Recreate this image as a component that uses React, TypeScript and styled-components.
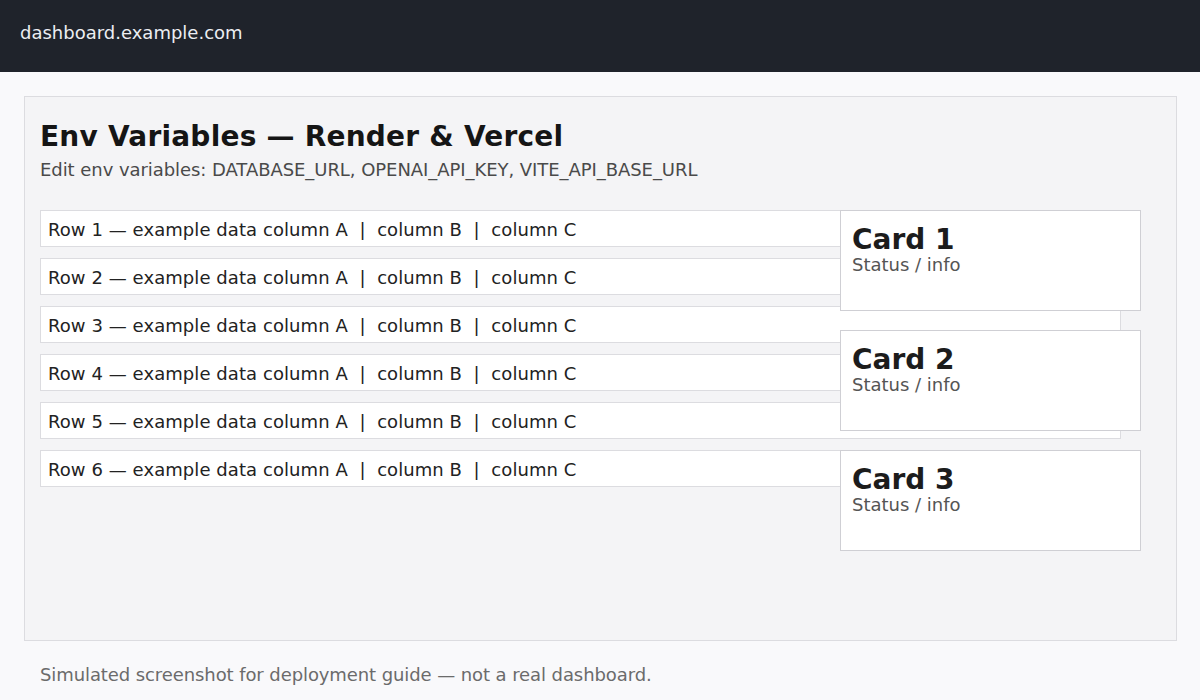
import React from "react";
import styled, { createGlobalStyle } from "styled-components";

const Global = createGlobalStyle`
  html, body { margin: 0; padding: 0; }
  body {
    background: #f9f9fb;
    font-family: "DejaVu Sans", Verdana, sans-serif;
    width: 1200px;
    height: 700px;
    overflow: hidden;
  }
`;

const Header = styled.header`
  height: 72px;
  box-sizing: border-box;
  background: #1f232b;
  color: #eceef2;
  font-size: 18px;
  padding: 22px 20px 0;
`;

const Main = styled.main`
  padding: 24px 23px 0 24px;
`;

const Panel = styled.section`
  box-sizing: border-box;
  height: 545px;
  background: #f4f4f6;
  border: 1px solid #dcdce0;
  padding: 23px 15px 16px;
`;

const Title = styled.h1`
  margin: 0;
  font-size: 28px;
  font-weight: 700;
  color: #151515;
  line-height: normal;
  letter-spacing: 0.22px;
`;

const Subtitle = styled.p`
  margin: 6px 0 30px;
  font-size: 18px;
  color: #4a4a4a;
  line-height: normal;
  letter-spacing: -0.06px;
`;

const Board = styled.div`
  display: grid;
  grid-template-columns: 800px 281px 20px;
  align-items: start;
`;

const RowList = styled.div`
  grid-column: 1 / 3;
  grid-row: 1;
  display: flex;
  flex-direction: column;
  gap: 11px;
`;

const Row = styled.div`
  background: #ffffff;
  border: 1px solid #dcdce0;
  padding: 8px 7px 5px;
  font-size: 18px;
  line-height: 22px;
  color: #222;
  white-space: pre;
  letter-spacing: 0.07px;
`;

const CardList = styled.div`
  grid-column: 2 / 4;
  grid-row: 1;
  display: flex;
  flex-direction: column;
  gap: 19px;
`;

const Card = styled.div`
  box-sizing: border-box;
  height: 101px;
  background: #ffffff;
  border: 1px solid #cfcfd4;
  padding: 12px 11px;
`;

const CardTitle = styled.div`
  font-size: 28px;
  font-weight: 700;
  color: #1c1c1c;
  line-height: normal;
`;

const CardInfo = styled.div`
  margin-top: -2px;
  font-size: 18px;
  color: #555;
  line-height: normal;
`;

const Footer = styled.footer`
  padding: 23px 40px 0;
  font-size: 18px;
  color: #6b6b6b;
  line-height: normal;
  letter-spacing: -0.09px;
`;

const rows = [1, 2, 3, 4, 5, 6];
const cards = [1, 2, 3];

export default function App() {
  return (
    <>
      <Global />
      <Header>dashboard.example.com</Header>
      <Main>
        <Panel>
          <Title>Env Variables — Render &amp; Vercel</Title>
          <Subtitle>Edit env variables: DATABASE_URL, OPENAI_API_KEY, VITE_API_BASE_URL</Subtitle>
          <Board>
            <RowList>
              {rows.map((n) => (
                <Row key={n}>{`Row ${n} — example data column A  |  column B  |  column C`}</Row>
              ))}
            </RowList>
            <CardList>
              {cards.map((n) => (
                <Card key={n}>
                  <CardTitle>Card {n}</CardTitle>
                  <CardInfo>Status / info</CardInfo>
                </Card>
              ))}
            </CardList>
          </Board>
        </Panel>
      </Main>
      <Footer>Simulated screenshot for deployment guide — not a real dashboard.</Footer>
    </>
  );
}
